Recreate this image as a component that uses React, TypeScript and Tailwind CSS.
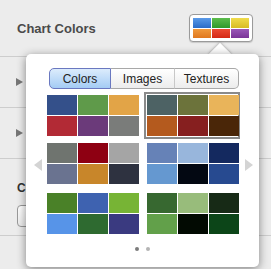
import React from 'react';

type Group = { colors: string[]; selected?: boolean };

const groups: Group[] = [
  { colors: ['#34508a', '#5f9a4a', '#e2a447', '#b22a35', '#6b3a7a', '#7a7c7a'] },
  { colors: ['#4d6264', '#6c733b', '#e9b45a', '#b45a1e', '#861f1f', '#4a2608'], selected: true },
  { colors: ['#6f746f', '#8e0012', '#a5a5a5', '#6a7390', '#c8862a', '#2e3240'] },
  { colors: ['#6682b7', '#98b6dc', '#14295f', '#6598d0', '#030812', '#274a90'] },
  { colors: ['#4a8128', '#3e62b0', '#77b435', '#5794e8', '#2e6a30', '#3a3a80'] },
  { colors: ['#376830', '#98bc7b', '#172a16', '#62a04a', '#020a02', '#0c4518'] },
];

const buttonColors = [
  'bg-gradient-to-b from-[#5a9ae8] to-[#2a6cc8]',
  'bg-gradient-to-b from-[#5cbc4c] to-[#2e9a2a]',
  'bg-gradient-to-b from-[#f0dc4a] to-[#d8bc22]',
  'bg-gradient-to-b from-[#f09a3c] to-[#e0781e]',
  'bg-gradient-to-b from-[#ec4a32] to-[#d42814]',
  'bg-gradient-to-b from-[#9a58b8] to-[#7a3498]',
];

function Swatches({ group }: { group: Group }) {
  return (
    <div
      className={
        'p-px border-2 ' + (group.selected ? 'border-[#8a8a8a]' : 'border-transparent')
      }
    >
      <div className="grid grid-cols-[30px_30px_30px] grid-rows-[20px_20px] gap-px">
        {group.colors.map((c, i) => (
          <div key={i} style={{ backgroundColor: c }} />
        ))}
      </div>
    </div>
  );
}

function Segment({ label, active, last }: { label: string; active?: boolean; last?: boolean }) {
  return (
    <div
      className={
        'flex items-center justify-center text-[12px] text-[#222] ' +
        (active
          ? 'w-[62px] bg-gradient-to-b from-[#dcecfc] to-[#a4ccf4] border border-[#6a78c0] rounded-l-[5px] '
          : 'bg-gradient-to-b from-white to-[#ececec] border-y border-[#a8a8a8] ' +
            (last ? 'flex-1 border-r rounded-r-[5px] ' : 'w-[64px] border-r border-r-[#c8c8c8] '))
      }
    >
      {label}
    </div>
  );
}

export default function App() {
  return (
    <div
      className="relative w-[271px] h-[269px] overflow-hidden bg-[#ececec] text-[#444]"
      style={{ fontFamily: '"Liberation Sans", Arial, sans-serif' }}
    >
      {/* inspector rows */}
      <div className="flex flex-col">
        <div className="h-[57px] flex items-center justify-between pl-[17px] pr-[18px] border-b border-[#cdcdcd]">
          <span className="text-[13px] font-bold text-[#4a4a4a] mt-[1px]">Chart Colors</span>
          <div className="w-[64px] h-[28px] rounded-[4px] border border-[#9a9a9a] bg-white p-[3px] shadow-[0_1px_1px_rgba(0,0,0,0.15)]">
            <div className="grid grid-cols-3 grid-rows-2 gap-px h-full">
              {buttonColors.map((c, i) => (
                <div key={i} className={c} />
              ))}
            </div>
          </div>
        </div>
        <div className="h-[51px] flex items-center pl-[16px] border-b border-[#cdcdcd]">
          <div className="w-0 h-0 border-y-[4.5px] border-y-transparent border-l-[7px] border-l-[#777]" />
        </div>
        <div className="h-[51px] flex items-center pl-[16px] border-b border-[#cdcdcd]">
          <div className="w-0 h-0 border-y-[4.5px] border-y-transparent border-l-[7px] border-l-[#777]" />
        </div>
        <div className="h-[77px] flex flex-col pl-[17px] pt-[20px] border-b border-[#cdcdcd]">
          <span className="text-[12px] font-bold text-[#333]">Chart Font</span>
          <div className="mt-[8px] w-[120px] h-[22px] rounded-[4px] border border-[#999] bg-gradient-to-b from-white to-[#ececec]" />
        </div>
      </div>

      {/* popover */}
      <div className="absolute left-[26px] top-[54px] w-[233px] h-[213px]">
        <div className="absolute left-[186px] top-[-8px] w-[16px] h-[16px] rotate-45 bg-white shadow-[0_0_3px_rgba(0,0,0,0.4)]" />
        <div className="relative w-full h-full bg-white rounded-[5px] shadow-[0_2px_10px_rgba(0,0,0,0.45)] flex flex-col items-center">
          <div className="mt-[14px] flex h-[21px] w-[190px] ml-[3px]">
            <Segment label="Colors" active />
            <Segment label="Images" />
            <Segment label="Textures" last />
          </div>
          <div className="relative w-full flex-1">
            <div className="absolute left-[18px] top-[3px] grid grid-cols-[96px_96px] gap-x-[4px]">
              <Swatches group={groups[0]} />
              <Swatches group={groups[1]} />
            </div>
            <div className="absolute left-[18px] top-[51px] grid grid-cols-[96px_96px] gap-x-[4px]">
              <Swatches group={groups[2]} />
              <Swatches group={groups[3]} />
            </div>
            <div className="absolute left-[18px] top-[101px] grid grid-cols-[96px_96px] gap-x-[4px]">
              <Swatches group={groups[4]} />
              <Swatches group={groups[5]} />
            </div>
            <div className="absolute left-[8px] top-[70px] w-0 h-0 border-y-[6px] border-y-transparent border-r-[8px] border-r-[#d4d4d4]" />
            <div className="absolute left-[219px] top-[70px] w-0 h-0 border-y-[6px] border-y-transparent border-l-[8px] border-l-[#d4d4d4]" />
            <div className="absolute left-[109px] top-[158px] flex gap-[7px]">
              <div className="w-[4px] h-[4px] rounded-full bg-[#7c7c7c]" />
              <div className="w-[4px] h-[4px] rounded-full bg-[#b4b4b4]" />
            </div>
          </div>
        </div>
      </div>
    </div>
  );
}
